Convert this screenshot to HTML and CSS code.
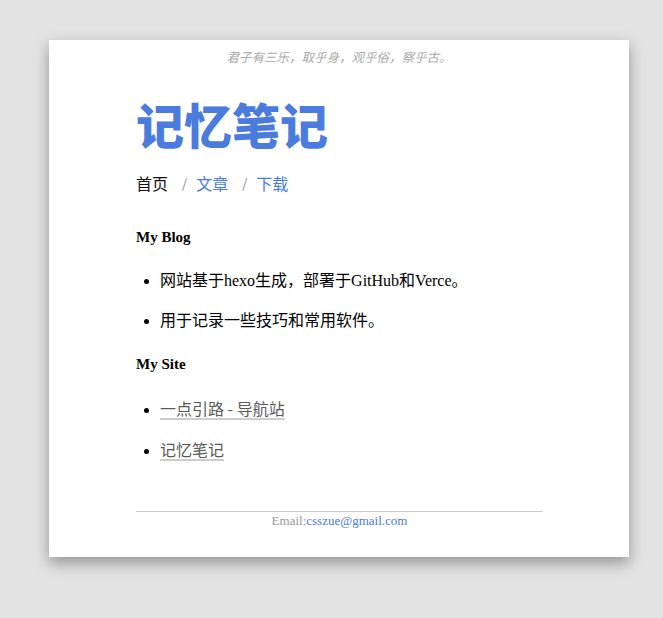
FILE: index.html
```html
<!DOCTYPE html>
<html lang="zh-CN">
<head>
<meta charset="utf-8">
<title>记忆笔记</title>
<link rel="stylesheet" href="styles.css">
</head>
<body>
<div class="page">
  <div class="card">
    <p class="motto">君子有三乐，取乎身，观乎俗，察乎古。</p>
    <div class="content">
      <h1 class="title">记忆笔记</h1>
      <nav class="nav">
        <span class="nav-current">首页</span>
        <span class="sep">/</span>
        <a class="nav-link" href="#">文章</a>
        <span class="sep">/</span>
        <a class="nav-link" href="#">下载</a>
      </nav>
      <h3 class="section">My Blog</h3>
      <ul class="list list-first">
        <li>网站基于hexo生成，部署于GitHub和Verce。</li>
        <li>用于记录一些技巧和常用软件。</li>
      </ul>
      <h3 class="section section-second">My Site</h3>
      <ul class="list list-second">
        <li><a class="site-link" href="#">一点引路 - 导航站</a></li>
        <li><a class="site-link" href="#">记忆笔记</a></li>
      </ul>
      <footer class="footer">
        <span class="footer-label">Email:</span><a class="footer-mail" href="#">csszue@gmail.com</a>
      </footer>
    </div>
  </div>
</div>
</body>
</html>
```

FILE: styles.css
```css
html, body {
  margin: 0;
  padding: 0;
}
body {
  background: #e3e3e3;
  font-family: "Liberation Serif", "Noto Sans CJK SC", serif;
  color: #000;
  height: 618px;
  overflow: hidden;
}
.page {
  padding: 40px 0 0 49px;
}
.card {
  width: 580px;
  height: 517px;
  background: #fff;
  box-shadow: 0 6px 14px rgba(0, 0, 0, 0.35);
  box-sizing: border-box;
  padding-top: 9px;
}
.motto {
  margin: 0;
  text-align: center;
  font-family: "Noto Sans CJK SC", sans-serif;
  font-style: italic;
  font-size: 12.5px;
  line-height: 16px;
  color: #a9a9a9;
}
.content {
  margin: 0 86px 0 87px;
}
.title {
  margin: 30px 0 0 0;
  font-family: "Noto Sans CJK SC", sans-serif;
  font-weight: 900;
  font-size: 48px;
  line-height: 56px;
  color: #4a7bdd;
}
.nav {
  margin-top: 21px;
  font-family: "Noto Sans CJK SC", sans-serif;
  font-size: 16px;
  line-height: 22px;
  display: flex;
  align-items: center;
}
.nav-current {
  color: #111;
}
.sep {
  color: #888;
  font-size: 13px;
  margin: 0 9px 0 14px;
}
.nav-link {
  color: #4a7bdd;
  text-decoration: none;
}
.section {
  margin: 33px 0 0 0;
  font-size: 15px;
  line-height: 20px;
  font-weight: bold;
}
.list {
  margin: 0;
  padding-left: 24px;
  font-size: 16px;
  line-height: 20px;
}
.list-first {
  margin-top: 24px;
}
.list li + li {
  margin-top: 20px;
}
.section-second {
  margin-top: 23px;
}
.list-second {
  margin-top: 24px;
}
.list-second li + li {
  margin-top: 19px;
}
.site-link {
  color: #5a5a5a;
  font-family: "Noto Sans CJK SC", sans-serif;
  text-decoration: underline;
  text-decoration-color: #cccccc;
  text-decoration-thickness: 2px;
  text-underline-offset: 3px;
}
.footer {
  margin-top: 50px;
  border-top: 1px solid #cccccc;
  text-align: center;
  font-size: 13px;
  line-height: 18px;
  padding-top: 0;
}
.footer-label {
  color: #999;
}
.footer-mail {
  color: #4a7bdd;
  text-decoration: none;
}
```
